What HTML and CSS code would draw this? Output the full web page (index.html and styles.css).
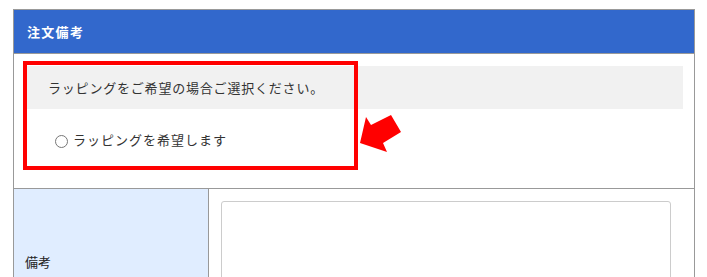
FILE: index.html
```html
<!DOCTYPE html>
<html lang="ja">
<head>
<meta charset="utf-8">
<link rel="stylesheet" href="styles.css">
</head>
<body>
<div class="page">
  <div class="panel">
    <div class="panel-head">注文備考</div>
    <div class="wrap-section">
      <div class="notice">ラッピングをご希望の場合ご選択ください。</div>
      <label class="option"><span class="radio"></span><span class="option-text">ラッピングを希望します</span></label>
      <div class="highlight"></div>
      <svg class="arrow" width="50" height="45" viewBox="0 0 50 45">
        <polygon points="6,2 11,10 31,0 41,17 23,28 27,37 0,28" fill="#ff0000"/>
      </svg>
    </div>
    <div class="row">
      <div class="row-label">備考</div>
      <div class="row-field"><textarea class="memo"></textarea></div>
    </div>
  </div>
</div>
</body>
</html>
```

FILE: styles.css
```css
html, body {
  margin: 0;
  padding: 0;
  background: #ffffff;
}
body {
  font-family: "Noto Sans CJK JP", "Noto Sans", sans-serif;
  color: #333333;
  overflow: hidden;
}
.page {
  padding: 9px 12px 0 13px;
}
.panel {
  width: 680px;
  border: 1px solid #999999;
}
.panel-head {
  height: 43px;
  background: #3268cc;
  border-bottom: 1px solid #999999;
  color: #ffffff;
  font-weight: bold;
  font-size: 13px;
  letter-spacing: 1.3px;
  line-height: 43px;
  padding-left: 13px;
}
.wrap-section {
  position: relative;
  padding: 12px 11px 0 11px;
  height: 122px;
  border-bottom: 1px solid #999999;
}
.notice {
  height: 43px;
  background: #f1f1f1;
  font-size: 13px;
  letter-spacing: 0.8px;
  line-height: 43px;
  padding-left: 23px;
}
.option {
  display: flex;
  align-items: center;
  margin-top: 21px;
  padding-left: 30px;
  height: 20px;
  font-size: 13px;
  letter-spacing: 1px;
}
.radio {
  width: 11px;
  height: 11px;
  border: 1px solid #777777;
  border-radius: 50%;
  margin-right: 5px;
  margin-top: 3px;
  flex: none;
}
.option-text {
  line-height: 20px;
}
.highlight {
  position: absolute;
  left: 9px;
  top: 7px;
  width: 327px;
  height: 101px;
  border: 4px solid #ff0000;
}
.arrow {
  position: absolute;
  left: 346px;
  top: 61px;
}
.row {
  display: flex;
}
.row-label {
  width: 183px;
  background: #e0edff;
  border-right: 1px solid #999999;
  display: flex;
  align-items: center;
  padding-left: 11px;
  font-size: 13px;
  color: #222222;
}
.row-field {
  flex: 1;
  padding: 12px 0 12px 12px;
}
.memo {
  display: block;
  width: 450px;
  height: 120px;
  box-sizing: border-box;
  border: 1px solid #cccccc;
  border-radius: 3px;
  resize: none;
  margin: 0;
}
```
